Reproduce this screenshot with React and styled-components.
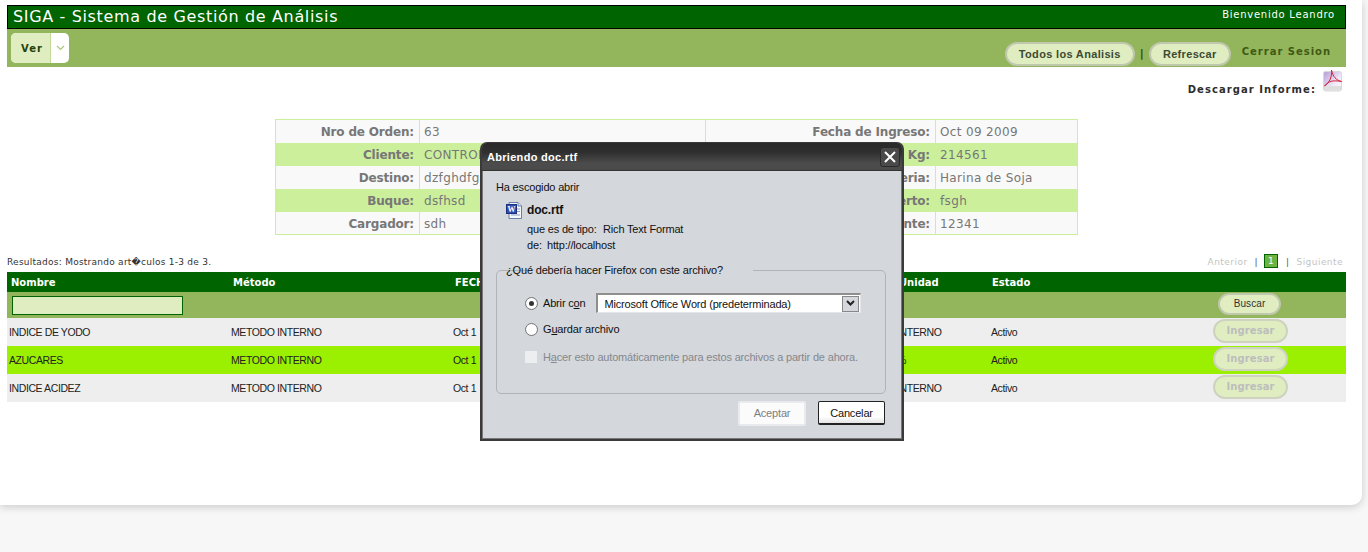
import React from "react";
import styled, { createGlobalStyle } from "styled-components";

const Global = createGlobalStyle`
  html, body { margin: 0; padding: 0; background: #f7f7f7; }
  body { width: 1368px; height: 552px; overflow: hidden; font-family: "DejaVu Sans", Verdana, sans-serif; }
  * { box-sizing: border-box; }
`;

const Card = styled.div`
  position: relative;
  width: 1362px;
  height: 505px;
  padding: 5px 16px 0 7px;
  background: #fff;
  border-radius: 0 0 10px 0;
  box-shadow: 0 2px 8px rgba(0, 0, 0, 0.18);
`;

const TitleBar = styled.header`
  height: 24px;
  background: #006400;
  border: 1px solid #000;
  color: #fff;
  display: flex;
  justify-content: space-between;
  padding: 0 10px 0 5px;
`;
const AppTitle = styled.h1`
  margin: 0;
  font-size: 16px;
  line-height: 21px;
  font-weight: 400;
  letter-spacing: 0.65px;
`;
const Welcome = styled.span`
  font-size: 10px;
  line-height: 17px;
  letter-spacing: 0.75px;
`;

const NavBar = styled.nav`
  height: 38px;
  background: #93b55b;
  display: flex;
  justify-content: space-between;
  padding: 4px 15px 0 4px;
`;
const SplitButton = styled.div`
  display: flex;
  width: 58px;
  height: 30px;
  border-radius: 5px;
  overflow: hidden;
  background: #fff;
`;
const SplitLabel = styled.span`
  width: 40px;
  padding-left: 3px;
  background: #dfedc1;
  border-right: 1px solid #c3d99a;
  color: #26420c;
  font-size: 10px;
  font-weight: 700;
  letter-spacing: 1.1px;
  line-height: 31px;
  text-align: center;
`;
const SplitArrow = styled.span`
  flex: 1;
  display: flex;
  align-items: center;
  justify-content: center;
`;
const NavActions = styled.div`
  display: flex;
  align-items: flex-start;
  padding-top: 9px;
`;
const PillButton = styled.button`
  height: 24px;
  width: ${(p) => p.$w}px;
  padding: 0;
  border: 2px solid #bfc7ad;
  border-radius: 12px;
  background: #dfedc1;
  color: #3d4a33;
  font-family: "Liberation Sans", Arial, sans-serif;
  font-size: 11px;
  font-weight: 700;
  letter-spacing: 0.33px;
`;
const Pipe = styled.span`
  width: 14px;
  margin-top: 5px;
  text-align: center;
  color: #2f4a12;
  font-size: 11px;
  font-weight: 700;
`;
const Logout = styled.a`
  margin: 4px 0 0 11px;
  color: #3f5a14;
  font-size: 10px;
  font-weight: 700;
  letter-spacing: 0.98px;
`;

const DownloadRow = styled.div`
  height: 52px;
  display: flex;
  justify-content: flex-end;
  align-items: flex-start;
  padding: 3px 3px 0 0;
  gap: 7px;
`;
const DownloadLabel = styled.span`
  margin-top: 14px;
  color: #2d2d2d;
  font-size: 10px;
  font-weight: 700;
  letter-spacing: 1.06px;
`;

const InfoTable = styled.table`
  width: 802px;
  margin: 0 0 0 268px;
  border-collapse: collapse;
  table-layout: fixed;
  border: 1px solid #cbef9b;
  font-size: 12px;
`;
const InfoRow = styled.tr`
  height: 23px;
  background: ${(p) => (p.$alt ? "#cbef9b" : "#f9f9f9")};
`;
const InfoLabel = styled.td`
  padding: 2px 5px 0 0;
  text-align: right;
  font-weight: 700;
  letter-spacing: -0.17px;
  color: #777;
  border-right: 1px solid #cbef9b;
  white-space: nowrap;
  overflow: hidden;
`;
const InfoValue = styled.td`
  padding: 2px 0 0 4px;
  letter-spacing: 0.35px;
  color: #777;
  border-right: 1px solid #cbef9b;
  white-space: nowrap;
  overflow: hidden;
`;

const ResultsBar = styled.div`
  height: 37px;
  padding-top: 22px;
  display: flex;
  justify-content: space-between;
  font-size: 9px;
  letter-spacing: 0.25px;
  color: #333;
`;
const Pager = styled.div`
  display: flex;
  align-items: flex-start;
  padding-right: 3px;
  letter-spacing: 0.45px;
  color: #c4c4c4;
`;
const PagerSep = styled.span`
  color: #555;
  margin: 0 7px;
`;
const PageNum = styled.span`
  width: 14px;
  height: 14px;
  margin: -3px 1px 0 -1px;
  background: #6db33f;
  border: 1px solid #006400;
  color: #fff;
  text-align: center;
  line-height: 12px;
`;

const Grid = styled.table`
  width: 1339px;
  border-collapse: collapse;
  table-layout: fixed;
`;
const HeadRow = styled.tr`
  height: 20px;
  background: #006400;
`;
const Th = styled.th`
  padding: 0 0 0 ${(p) => p.$pad ?? 4}px;
  text-align: left;
  color: #fff;
  font-size: 10px;
  font-weight: 700;
  letter-spacing: 0;
  white-space: nowrap;
`;
const FilterRow = styled.tr`
  height: 26px;
  background: #93b55b;
`;
const FilterCell = styled.td`
  padding: 0 0 0 5px;
`;
const FilterInput = styled.input`
  display: block;
  width: 171px;
  height: 19px;
  padding: 0;
  background: #dfedc1;
  border: 1px solid #006400;
`;
const SearchButton = styled.button`
  width: 63px;
  height: 22px;
  padding: 0;
  margin-top: -3px;
  display: block;
  margin-left: 2px;
  border: 2px solid #bfc7ad;
  border-radius: 11px;
  background: #dfedc1;
  color: #333;
  font-size: 10px;
  letter-spacing: 0.1px;
`;
const Row = styled.tr`
  height: 28px;
  background: ${(p) => (p.$alt ? "#9bef00" : "#eeeeee")};
`;
const Td = styled.td`
  padding: 0 0 0 2px;
  color: #222;
  font-family: "Liberation Sans", Arial, sans-serif;
  font-size: 10.5px;
  letter-spacing: -0.4px;
  white-space: nowrap;
  overflow: hidden;
`;
const EnterButton = styled.button`
  display: block;
  width: 75px;
  height: 24px;
  margin: -3px 0 0 0;
  padding: 0;
  border: 2px solid #cdd3bf;
  border-radius: 12px;
  background: #dfedc1;
  color: #bdbdbd;
  font-family: "DejaVu Sans", sans-serif;
  font-size: 10px;
  font-weight: 700;
  letter-spacing: 0.1px;
`;

/* Modal dialog, over the page */
const Dialog = styled.div`
  position: absolute;
  left: 480px;
  top: 142px;
  width: 424px;
  height: 299px;
  display: flex;
  flex-direction: column;
  border: 2px solid #3a3a3a;
  border-top-width: 1px;
  border-radius: 7px 7px 0 0;
  background: #d4d7dc;
  font-family: "Liberation Sans", Tahoma, sans-serif;
  font-size: 11px;
  letter-spacing: -0.17px;
  color: #111;
  box-shadow: 0 0 0 1px #777 inset;
`;
const DialogTitle = styled.div`
  height: 28px;
  flex: none;
  display: flex;
  justify-content: space-between;
  align-items: center;
  padding: 0 2px 0 5px;
  border-radius: 5px 5px 0 0;
  border-bottom: 1px solid #333;
  background: linear-gradient(#2a2a2a, #2f2f2f 35%, #4c4c4c 75%, #4a4a4a);
  color: #fff;
  font-size: 11px;
  font-weight: 700;
  letter-spacing: 0.3px;
`;
const CloseBox = styled.span`
  width: 20px;
  height: 20px;
  display: flex;
  align-items: center;
  justify-content: center;
  border: 1px solid #2a2a2a;
  border-radius: 3px;
  background: #4a4a4a;
`;
const DialogBody = styled.div`
  flex: 1;
  display: flex;
  flex-direction: column;
  padding: 8px 16px 0 14px;
`;
const Line = styled.div`
  line-height: 16px;
  white-space: nowrap;
`;
const FileBlock = styled.div`
  margin-top: 7px;
  display: grid;
  grid-template-columns: 21px 1fr;
  padding-left: 10px;
`;
const FileName = styled.div`
  font-weight: 700;
  font-size: 12px;
  line-height: 16px;
`;
const Meta = styled.div`
  grid-column: 2;
  display: flex;
  line-height: 16px;
  margin-top: ${(p) => p.$mt || 0}px;
  white-space: nowrap;
`;
const MetaKey = styled.span`
  width: ${(p) => p.$w}px;
`;
const Group = styled.fieldset`
  margin: 11px 0 0 0;
  padding: 0 0 0 28px;
  height: 130px;
  border: 1px solid #b0b3b8;
  border-radius: 5px;
  min-width: 0;
`;
const GroupLegend = styled.legend`
  margin-left: 7px;
  padding: 0 2px;
  position: relative;
  left: -28px;
  line-height: 12px;
`;
const Option = styled.div`
  display: flex;
  align-items: center;
  height: 20px;
  margin-top: ${(p) => p.$mt}px;
  color: ${(p) => (p.$off ? "#85888d" : "inherit")};
`;
const Radio = styled.span`
  width: 13px;
  height: 13px;
  flex: none;
  margin-right: 5px;
  border-radius: 50%;
  border: 1px solid #777;
  background: radial-gradient(#fff 60%, #d5d5d5);
  display: flex;
  align-items: center;
  justify-content: center;
`;
const RadioDot = styled.span`
  width: 5px;
  height: 5px;
  border-radius: 50%;
  background: #333;
`;
const FakeCheck = styled.span`
  width: 12px;
  height: 12px;
  flex: none;
  margin-right: 6px;
  background: #eceef0;
`;
const Mnemonic = styled.u``;
const SelectBox = styled.div`
  width: 265px;
  height: 20px;
  margin-left: 10px;
  display: flex;
  align-items: center;
  justify-content: space-between;
  padding: 0 1px 0 7px;
  background: #fff;
  border: 1px solid #e4e6e9;
  border-top: 2px solid #8f8f8f;
  border-left: 2px solid #8f8f8f;
`;
const SelectArrow = styled.span`
  width: 17px;
  height: 16px;
  display: flex;
  align-items: center;
  justify-content: center;
  background: #d4d7dc;
  border: 1px solid #888;
`;
const Buttons = styled.div`
  display: flex;
  justify-content: flex-end;
  gap: 12px;
  margin-top: 7px;
  margin-right: 1px;
`;
const DialogButton = styled.button`
  width: ${(p) => p.$w}px;
  height: ${(p) => p.$h}px;
  padding: 0 0 ${(p) => (p.$primary ? 0 : 2)}px;
  font: inherit;
  letter-spacing: inherit;
  background: ${(p) => (p.$primary ? "linear-gradient(#fff 70%, #e4e4e4)" : "#fbfbfb")};
  color: ${(p) => (p.$primary ? "#111" : "#7b7e82")};
  border: ${(p) => (p.$primary ? "1px solid #222" : "2px solid #e8eaed")};
  border-bottom-width: 2px;
  border-radius: 2px;
`;

const WordIcon = () => (
  <svg width="17" height="17" viewBox="0 0 17 17">
    <path d="M3 .5h9l3.5 3.5v12.5H3z" fill="#f4f7fb" stroke="#6a7fa8" />
    <path d="M12 .5V4h3.5" fill="#dbe4f2" stroke="#6a7fa8" />
    <path d="M11 7h3M11 9.5h3M5 13h9" stroke="#8aa0c8" />
    <rect x="0.5" y="2.5" width="10" height="9" fill="#2f4fb5" stroke="#1c2f7c" />
    <text x="5.5" y="10" textAnchor="middle" fontSize="8" fontWeight="700" fill="#fff" fontFamily="Liberation Serif, serif">W</text>
  </svg>
);

const PdfIcon = () => (
  <svg width="20" height="22" viewBox="0 0 20 22">
    <defs>
      <linearGradient id="pdfbg" x1="0" y1="0" x2="1" y2="1">
        <stop offset="0" stopColor="#b49ad8" />
        <stop offset="0.6" stopColor="#efe8f6" />
        <stop offset="1" stopColor="#fff" />
      </linearGradient>
    </defs>
    <rect x="0.5" y="1.5" width="18" height="19.5" rx="2" fill="url(#pdfbg)" stroke="#d8d8d8" />
    <rect x="1" y="16" width="17" height="4.5" fill="#dedede" />
    <path d="M8.5 0C9 7 7 12 1.5 16 6 11 9 10 18.5 11.5 13 10 10 7 8.5 0z" fill="none" stroke="#d2223a" strokeWidth="1" />
  </svg>
);

const rows = [
  { n: "INDICE DE YODO", u: "INTERNO" },
  { n: "AZUCARES", u: "%", alt: true },
  { n: "INDICE ACIDEZ", u: "INTERNO" },
];

export default function App() {
  return (
    <>
      <Global />
      <Card>
        <TitleBar>
          <AppTitle>SIGA - Sistema de Gestión de Análisis</AppTitle>
          <Welcome>Bienvenido Leandro</Welcome>
        </TitleBar>
        <NavBar>
          <SplitButton>
            <SplitLabel>Ver</SplitLabel>
            <SplitArrow>
              <svg width="9" height="6" viewBox="0 0 9 6"><path d="M1 1l3.5 3.5L8 1" fill="none" stroke="#a9c77a" strokeWidth="1.2" /></svg>
            </SplitArrow>
          </SplitButton>
          <NavActions>
            <PillButton $w={130}>Todos los Analisis</PillButton>
            <Pipe>|</Pipe>
            <PillButton $w={82}>Refrescar</PillButton>
            <Logout>Cerrar Sesion</Logout>
          </NavActions>
        </NavBar>
        <DownloadRow>
          <DownloadLabel>Descargar Informe:</DownloadLabel>
          <PdfIcon />
        </DownloadRow>
        <InfoTable>
          <colgroup>
            <col width="144" />
            <col width="286" />
            <col width="230" />
            <col width="142" />
          </colgroup>
          <tbody>
            <InfoRow><InfoLabel>Nro de Orden:</InfoLabel><InfoValue>63</InfoValue><InfoLabel>Fecha de Ingreso:</InfoLabel><InfoValue>Oct 09 2009</InfoValue></InfoRow>
            <InfoRow $alt><InfoLabel>Cliente:</InfoLabel><InfoValue>CONTROL</InfoValue><InfoLabel>Cantidad Kg:</InfoLabel><InfoValue>214561</InfoValue></InfoRow>
            <InfoRow><InfoLabel>Destino:</InfoLabel><InfoValue>dzfghdfg</InfoValue><InfoLabel>Materia:</InfoLabel><InfoValue>Harina de Soja</InfoValue></InfoRow>
            <InfoRow $alt><InfoLabel>Buque:</InfoLabel><InfoValue>dsfhsd</InfoValue><InfoLabel>Puerto:</InfoLabel><InfoValue>fsgh</InfoValue></InfoRow>
            <InfoRow><InfoLabel>Cargador:</InfoLabel><InfoValue>sdh</InfoValue><InfoLabel>Remitente:</InfoLabel><InfoValue>12341</InfoValue></InfoRow>
          </tbody>
        </InfoTable>
        <ResultsBar>
          <span>Resultados: Mostrando art�culos 1-3 de 3.</span>
          <Pager>
            <span>Anterior</span>
            <PagerSep>|</PagerSep>
            <PageNum>1</PageNum>
            <PagerSep>|</PagerSep>
            <span>Siguiente</span>
          </Pager>
        </ResultsBar>
        <Grid>
          <colgroup>
            <col width="222" />
            <col width="222" />
            <col width="222" />
            <col width="222" />
            <col width="94" />
            <col width="222" />
            <col width="135" />
          </colgroup>
          <thead>
            <HeadRow>
              <Th>Nombre</Th>
              <Th>Método</Th>
              <Th>FECHA</Th>
              <Th />
              <Th>Unidad</Th>
              <Th $pad={3}>Estado</Th>
              <Th />
            </HeadRow>
            <FilterRow>
              <FilterCell><FilterInput /></FilterCell>
              <FilterCell /><FilterCell /><FilterCell /><FilterCell /><FilterCell />
              <FilterCell><SearchButton>Buscar</SearchButton></FilterCell>
            </FilterRow>
          </thead>
          <tbody>
            {rows.map((r) => (
              <Row key={r.n} $alt={r.alt}>
                <Td>{r.n}</Td>
                <Td>METODO INTERNO</Td>
                <Td>Oct 1</Td>
                <Td />
                <Td>{r.u}</Td>
                <Td>Activo</Td>
                <Td><EnterButton>Ingresar</EnterButton></Td>
              </Row>
            ))}
          </tbody>
        </Grid>

        <Dialog>
          <DialogTitle>
            <span>Abriendo doc.rtf</span>
            <CloseBox>
              <svg width="12" height="12" viewBox="0 0 12 12"><path d="M1 1l10 10M11 1L1 11" stroke="#fff" strokeWidth="2" /></svg>
            </CloseBox>
          </DialogTitle>
          <DialogBody>
            <Line>Ha escogido abrir</Line>
            <FileBlock>
              <WordIcon />
              <FileName>doc.rtf</FileName>
              <Meta $mt={2}><MetaKey $w={76}>que es de tipo:</MetaKey><span>Rich Text Format</span></Meta>
              <Meta><MetaKey $w={20}>de:</MetaKey><span>http://localhost</span></Meta>
            </FileBlock>
            <Group>
              <GroupLegend>¿Qué debería hacer Firefox con este archivo?</GroupLegend>
              <Option $mt={17}>
                <Radio><RadioDot /></Radio>
                <span>Abrir c<Mnemonic>o</Mnemonic>n</span>
                <SelectBox>
                  <span>Microsoft Office Word (predeterminada)</span>
                  <SelectArrow>
                    <svg width="9" height="7" viewBox="0 0 9 7"><path d="M1 1l3.5 3.5L8 1" fill="none" stroke="#222" strokeWidth="2" /></svg>
                  </SelectArrow>
                </SelectBox>
              </Option>
              <Option $mt={6}><Radio /><span>G<Mnemonic>u</Mnemonic>ardar archivo</span></Option>
              <Option $mt={8} $off><FakeCheck /><span>H<Mnemonic>a</Mnemonic>cer esto automáticamente para estos archivos a partir de ahora.</span></Option>
            </Group>
            <Buttons>
              <DialogButton $w={68} $h={25}>Aceptar</DialogButton>
              <DialogButton $w={67} $h={24} $primary>Cancelar</DialogButton>
            </Buttons>
          </DialogBody>
        </Dialog>
      </Card>
    </>
  );
}
